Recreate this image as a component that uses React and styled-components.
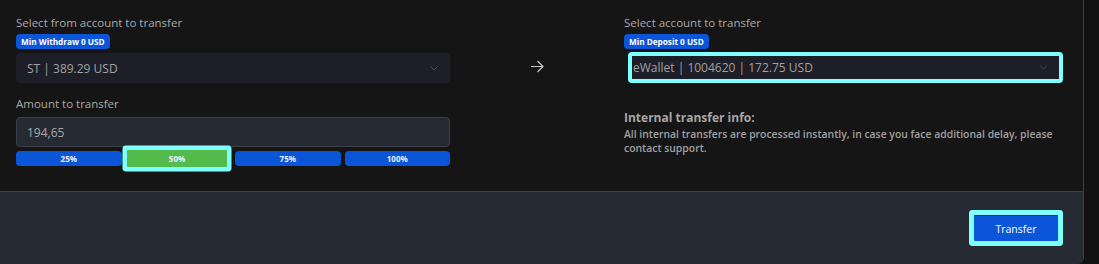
import React from "react";
import styled, { createGlobalStyle } from "styled-components";

const GlobalStyle = createGlobalStyle`
  html, body { margin: 0; padding: 0; background: #121212; }
  body { font-family: "Open Sans", "Noto Sans", sans-serif; }
  * { box-sizing: border-box; }
`;

const CYAN = "#80ffff";
const BLUE = "#0b56d8";

const Panel = styled.div`
  width: 1084px;
  height: 264px;
  background: #151515;
  border-right: 1px solid #3a3f4b;
  border-bottom-right-radius: 7px;
  overflow: hidden;
  display: flex;
  flex-direction: column;
`;

const Body = styled.div`
  height: 191px;
  padding: 15px 20px 0 16px;
  display: grid;
  grid-template-columns: 434px 1fr 439px;
`;

const Column = styled.div`
  display: flex;
  flex-direction: column;
  align-items: flex-start;
`;

const Middle = styled.div`
  display: flex;
  justify-content: center;
  padding-top: 45px;
  color: #c8c8c8;
`;

const Label = styled.div`
  font-size: 11.5px;
  line-height: 16px;
  color: #a9a9a9;
  margin-top: ${(p) => p.$mt || 0}px;
`;

const Badge = styled.div`
  margin-top: 3px;
  height: 15px;
  padding: 0 5px;
  border-radius: 4px;
  background: ${BLUE};
  color: #fff;
  font-size: 8.2px;
  font-weight: 700;
  line-height: 15px;
  white-space: nowrap;
`;

const Select = styled.div`
  margin-top: ${(p) => (p.$highlight ? 3 : 4)}px;
  margin-left: ${(p) => (p.$highlight ? 4 : 0)}px;
  width: ${(p) => (p.$highlight ? "calc(100% - 4px)" : "100%")};
  height: ${(p) => (p.$highlight ? 31 : 30)}px;
  border-radius: 4px;
  background: #1d1e27;
  border: ${(p) => (p.$highlight ? `4.5px solid ${CYAN}` : "none")};
  display: flex;
  align-items: center;
  justify-content: space-between;
  padding: ${(p) => (p.$highlight ? "0 11px 0 1px" : "0 12px 0 11px")};
  font-size: 12px;
  color: #a2a2a2;
`;

const Input = styled.div`
  margin-top: 5px;
  width: 100%;
  height: 30px;
  border-radius: 4px;
  background: #262a33;
  border: 1px solid #3b3f49;
  display: flex;
  align-items: center;
  padding: 0 10px;
  font-size: 12px;
  color: #a8a8a8;
`;

const Percents = styled.div`
  margin-top: 4px;
  width: 100%;
  display: grid;
  grid-template-columns: repeat(4, 1fr);
  gap: 4px;
`;

const PercentButton = styled.div`
  height: ${(p) => (p.$active ? 17 : 15)}px;
  margin: ${(p) => (p.$active ? "-1px 4px 0 1.5px" : "0")};
  border-radius: ${(p) => (p.$active ? 1 : 4)}px;
  background: ${(p) => (p.$active ? "#53bb4b" : BLUE)};
  box-shadow: ${(p) => (p.$active ? `0 0 0 4.5px ${CYAN}` : "none")};
  color: #eef0ff;
  font-size: 8px;
  font-weight: 700;
  display: flex;
  align-items: center;
  justify-content: center;
`;

const InfoTitle = styled.div`
  margin-top: 27px;
  font-size: 12px;
  font-weight: 700;
  line-height: 16px;
  color: #a6a6a6;
`;

const InfoText = styled.div`
  margin-top: 2px;
  font-size: 10.4px;
  font-weight: 600;
  line-height: 13.5px;
  color: #a0a0a0;
  max-width: 439px;
`;

const Footer = styled.div`
  flex: 1;
  background: #262a33;
  border-top: 1px solid #3b404b;
  display: flex;
  justify-content: flex-end;
  align-items: flex-start;
  padding: 23px 25px 0 0;
`;

const TransferButton = styled.button`
  width: 84px;
  height: 26px;
  border: none;
  border-top: 1px solid #1a2a50;
  border-radius: 1px;
  background: ${BLUE};
  box-shadow: 0 0 0 5px ${CYAN};
  color: #fff;
  font-family: "Open Sans", sans-serif;
  font-size: 10.5px;
  padding: 0;
`;

const Chevron = ({ w = 8 }) => (
  <svg width={w} height="5" viewBox="0 0 8 5" fill="none">
    <path d="M0.5 0.5 L4 4 L7.5 0.5" stroke="#4a4b56" strokeWidth="1" />
  </svg>
);

const Arrow = () => (
  <svg width="14" height="13" viewBox="0 0 14 13" fill="none">
    <path d="M1 6.5 H13 M7.5 1 L13 6.5 L7.5 12" stroke="#c8c8c8" strokeWidth="1.2" />
  </svg>
);

export default function App() {
  const percents = ["25%", "50%", "75%", "100%"];
  return (
    <>
      <GlobalStyle />
      <Panel>
        <Body>
          <Column>
            <Label>Select from account to transfer</Label>
            <Badge>Min Withdraw 0 USD</Badge>
            <Select>
              <span>ST | 389.29 USD</span>
              <Chevron />
            </Select>
            <Label $mt={13}>Amount to transfer</Label>
            <Input>194,65</Input>
            <Percents>
              {percents.map((p) => (
                <PercentButton key={p} $active={p === "50%"}>
                  {p}
                </PercentButton>
              ))}
            </Percents>
          </Column>
          <Middle>
            <Arrow />
          </Middle>
          <Column>
            <Label>Select account to transfer</Label>
            <Badge>Min Deposit 0 USD</Badge>
            <Select $highlight>
              <span>eWallet | 1004620 | 172.75 USD</span>
              <Chevron w={9} />
            </Select>
            <InfoTitle>Internal transfer info:</InfoTitle>
            <InfoText>
              All internal transfers are processed instantly, in case you face additional delay, please contact support.
            </InfoText>
          </Column>
        </Body>
        <Footer>
          <TransferButton>Transfer</TransferButton>
        </Footer>
      </Panel>
    </>
  );
}
